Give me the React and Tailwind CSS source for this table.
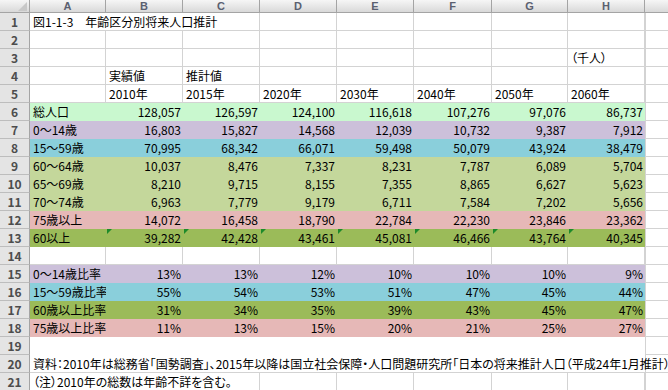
const W = ['w-[76px]', 'w-[77px]', 'w-[77px]', 'w-[77px]', 'w-[77px]', 'w-[78px]', 'w-[76px]', 'w-[77px]'];
const COLS = ['A', 'B', 'C', 'D', 'E', 'F', 'G', 'H'];

const GREEN = 'bg-[#c9f8cf]';
const LILAC = 'bg-[#ccc0da]';
const CYAN = 'bg-[#8acfdb]';
const OLIVE = 'bg-[#c4d79b]';
const PINK = 'bg-[#e6b8b7]';
const MOSS = 'bg-[#9bbb59]';

// each row: fill colour, cell values, how many leading cells lose their right gridline (text overflow)
const rows = [
  { n: 1, cells: ['図1-1-3　年齢区分別将来人口推計'], hide: 2 },
  { n: 2 },
  { n: 3, cells: ['', '', '', '', '', '', '', '（千人）'] },
  { n: 4, cells: ['', '実績値', '推計値'] },
  { n: 5, cells: ['', '2010年', '2015年', '2020年', '2030年', '2040年', '2050年', '2060年'] },
  { n: 6, fill: GREEN, num: true, cells: ['総人口', '128,057', '126,597', '124,100', '116,618', '107,276', '97,076', '86,737'] },
  { n: 7, fill: LILAC, num: true, cells: ['0～14歳', '16,803', '15,827', '14,568', '12,039', '10,732', '9,387', '7,912'] },
  { n: 8, fill: CYAN, num: true, cells: ['15～59歳', '70,995', '68,342', '66,071', '59,498', '50,079', '43,924', '38,479'] },
  { n: 9, fill: OLIVE, num: true, cells: ['60～64歳', '10,037', '8,476', '7,337', '8,231', '7,787', '6,089', '5,704'] },
  { n: 10, fill: OLIVE, num: true, cells: ['65～69歳', '8,210', '9,715', '8,155', '7,355', '8,865', '6,627', '5,623'] },
  { n: 11, fill: OLIVE, num: true, cells: ['70～74歳', '6,963', '7,779', '9,179', '6,711', '7,584', '7,202', '5,656'] },
  { n: 12, fill: PINK, num: true, cells: ['75歳以上', '14,072', '16,458', '18,790', '22,784', '22,230', '23,846', '23,362'] },
  { n: 13, fill: MOSS, num: true, tri: true, cells: ['60以上', '39,282', '42,428', '43,461', '45,081', '46,466', '43,764', '40,345'] },
  { n: 14 },
  { n: 15, fill: LILAC, num: true, cells: ['0～14歳比率', '13%', '13%', '12%', '10%', '10%', '10%', '9%'] },
  { n: 16, fill: CYAN, num: true, cells: ['15～59歳比率', '55%', '54%', '53%', '51%', '47%', '45%', '44%'] },
  { n: 17, fill: MOSS, num: true, cells: ['60歳以上比率', '31%', '34%', '35%', '39%', '43%', '45%', '47%'] },
  { n: 18, fill: PINK, num: true, cells: ['75歳以上比率', '11%', '13%', '15%', '20%', '21%', '25%', '27%'] },
  { n: 19, blank: true },
  { n: 20, blank: true, bottom: true, cells: ['資料：2010年は総務省「国勢調査」、2015年以降は国立社会保障・人口問題研究所「日本の将来推計人口（平成24年1月推計）」'] },
  { n: 21, cells: ['（注）2010年の総数は年齢不詳を含む。'], hide: 2 },
];

function ColumnHeader() {
  return (
    <div className="flex h-[13px] bg-linear-to-b from-[#f6f6f6] to-[#d9d9d9] border-b border-[#a4a4a4]">
      <div className="relative w-[30px] shrink-0 border-r border-[#a4a4a4]">
        <svg className="absolute right-[2px] bottom-[1px]" width="9" height="9" viewBox="0 0 9 9">
          <polygon points="9,0 9,9 0,9" fill="#c8c8c8" />
        </svg>
      </div>
      {COLS.map((c, i) => (
        <div
          key={c}
          className={`${W[i]} shrink-0 border-r border-[#a4a4a4] text-center font-['Liberation_Sans',sans-serif] text-[11px] leading-[12px] font-bold text-[#5a6070]`}
        >
          {c}
        </div>
      ))}
      <div className="flex-1" />
    </div>
  );
}

function Row({ n, fill, cells = [], num, tri, hide = 0, blank, bottom }) {
  return (
    <div className="flex h-[18px]">
      <div className="w-[30px] shrink-0 bg-[#e4e4e4] border-r border-b border-r-[#a4a4a4] border-b-[#bdbdbd] text-center text-[12px] leading-[17px] font-semibold text-[#4d4d4d]">
        {n}
      </div>
      {W.map((w, i) => {
        const v = cells[i];
        let cls;
        if (fill) cls = fill;
        else if (blank) cls = bottom ? 'border-b border-[#d3d3d3]' : '';
        else if (i < hide) cls = 'border-b border-[#d3d3d3]';
        else cls = 'border-r border-b border-[#d3d3d3]';
        const right = num && i > 0;
        return (
          <div
            key={i}
            className={`${w} relative shrink-0 ${cls} whitespace-nowrap text-[12px] leading-[18px] text-black ${right ? 'text-right pr-[2px]' : 'pl-[3px]'}`}
          >
            {tri && i > 0 && (
              <span className="absolute left-[1px] top-0 border-t-[5px] border-r-[5px] border-t-[#1d8a2a] border-r-transparent" />
            )}
            {v}
          </div>
        );
      })}
      <div className="flex-1 border-b border-l border-[#d3d3d3]" />
    </div>
  );
}

export default function App() {
  return (
    <div
      className="w-[668px] h-[390px] overflow-hidden bg-white [font-feature-settings:'palt']"
      style={{ fontFamily: '"Noto Sans CJK JP", "Noto Sans", sans-serif' }}
    >
      <ColumnHeader />
      {rows.map((r) => (
        <Row key={r.n} {...r} />
      ))}
    </div>
  );
}
